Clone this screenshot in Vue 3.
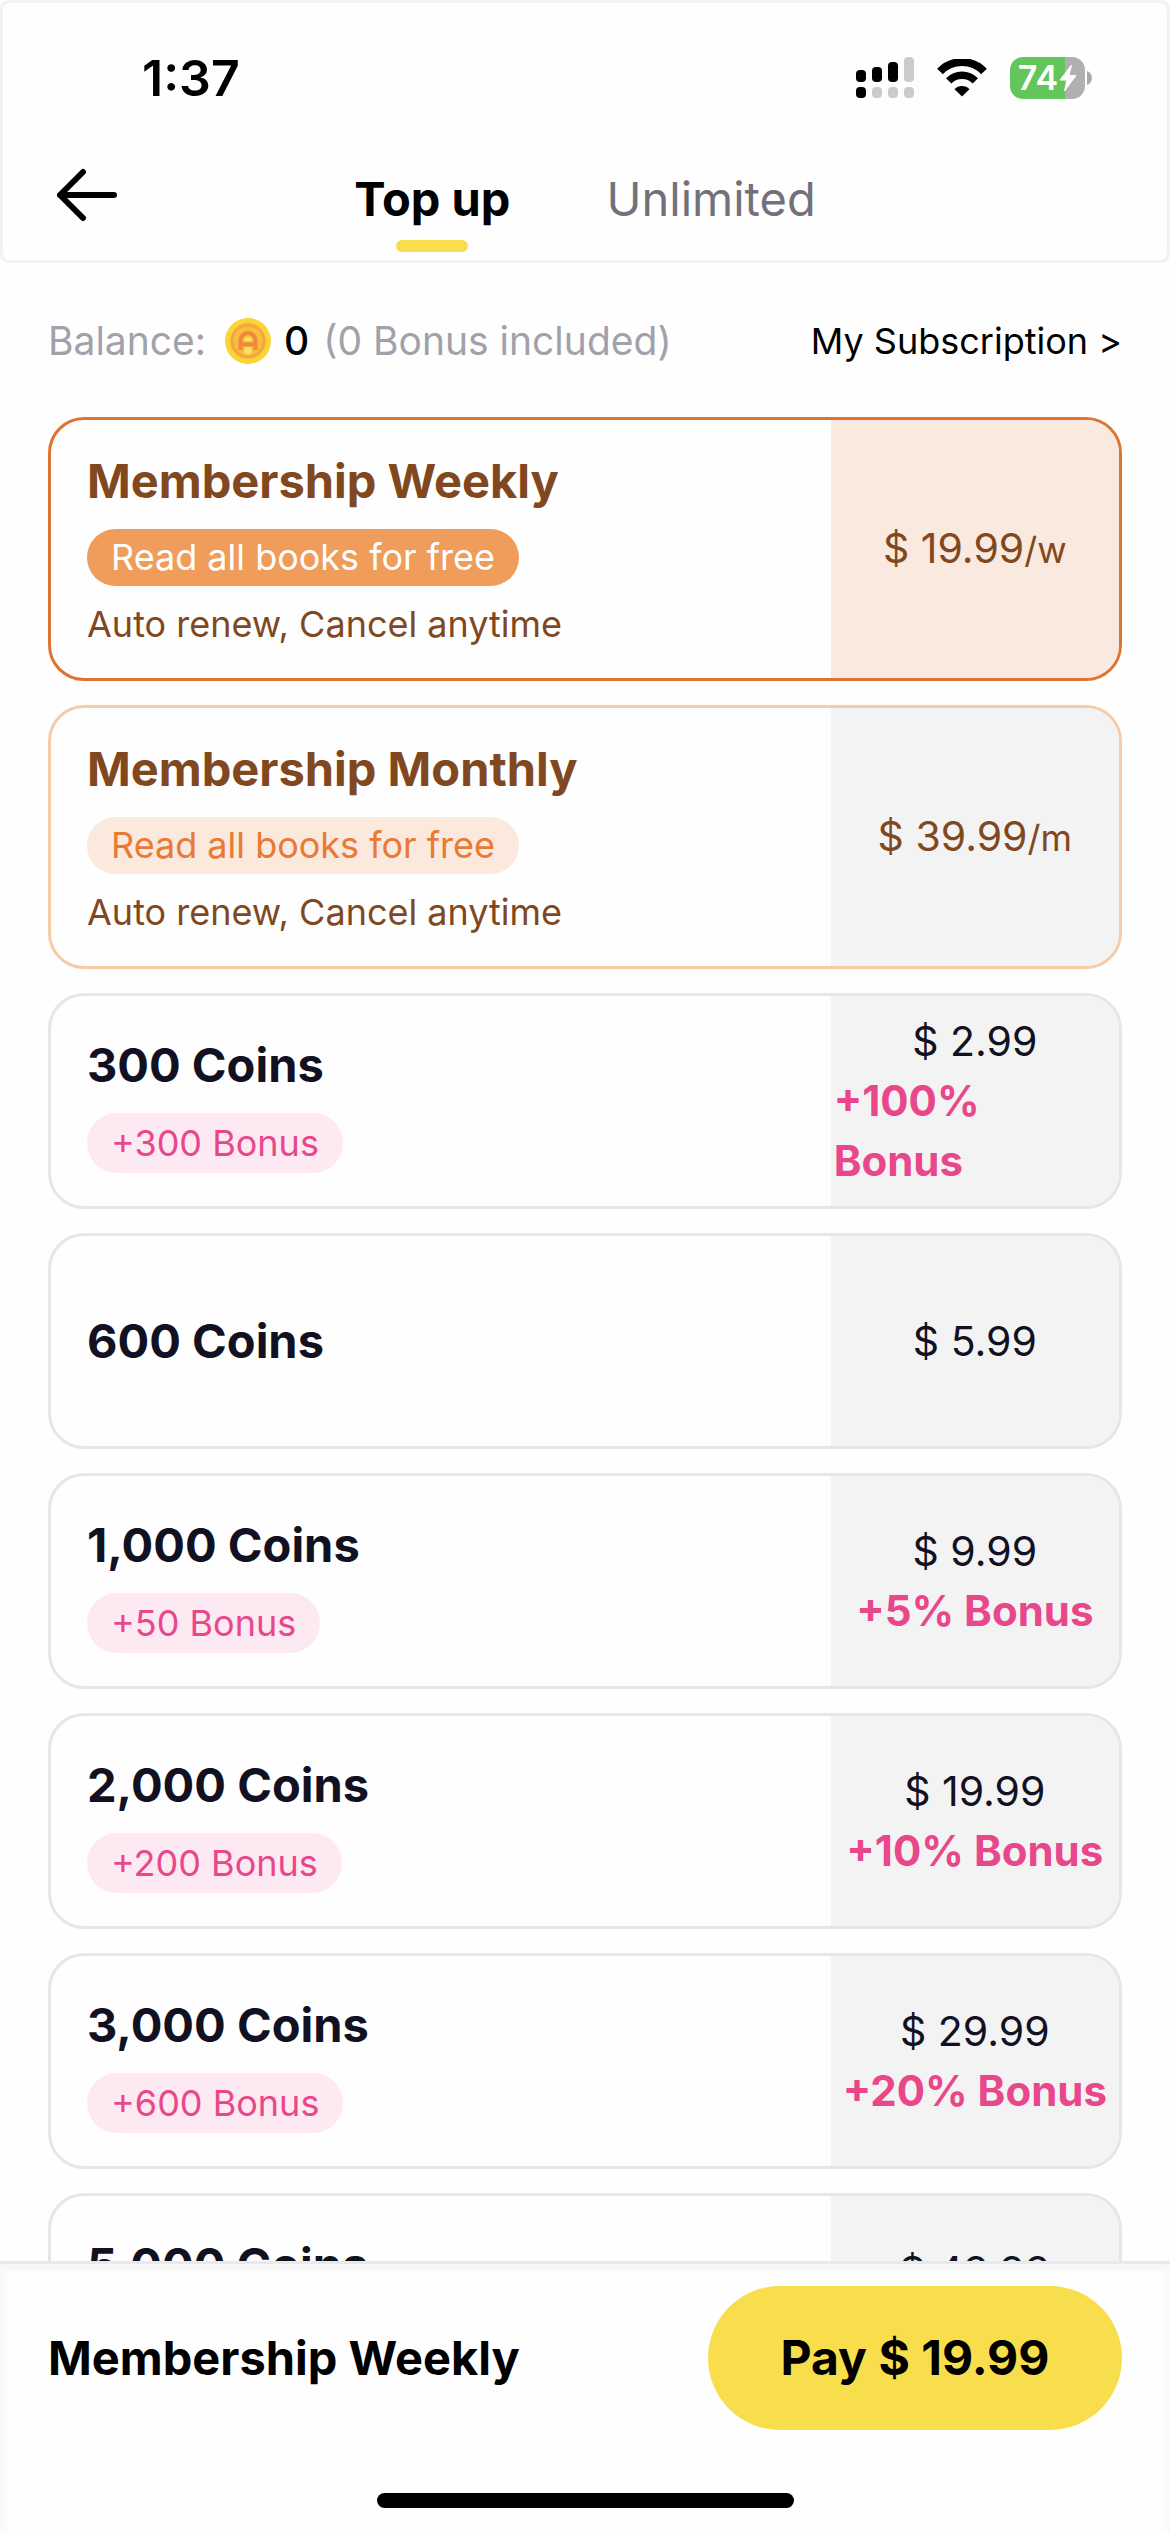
<script setup>
import { computed, ref } from 'vue'

const tabs = ['Top up', 'Unlimited']
const activeTab = ref('Top up')

const plans = [
  { id: 'weekly', title: 'Membership Weekly', price: '$ 19.99', unit: '/w', tag: 'Read all books for free', note: 'Auto renew, Cancel anytime' },
  { id: 'monthly', title: 'Membership Monthly', price: '$ 39.99', unit: '/m', tag: 'Read all books for free', note: 'Auto renew, Cancel anytime' },
  { id: 'c300', title: '300 Coins', price: '$ 2.99', tag: '+300 Bonus', extra: '+100% Bonus' },
  { id: 'c600', title: '600 Coins', price: '$ 5.99' },
  { id: 'c1000', title: '1,000 Coins', price: '$ 9.99', tag: '+50 Bonus', extra: '+5% Bonus' },
  { id: 'c2000', title: '2,000 Coins', price: '$ 19.99', tag: '+200 Bonus', extra: '+10% Bonus' },
  { id: 'c3000', title: '3,000 Coins', price: '$ 29.99', tag: '+600 Bonus', extra: '+20% Bonus' },
  { id: 'c5000', title: '5,000 Coins', price: '$ 49.99', tag: '\u00a0', extra: '\u00a0' }
]

const selectedId = ref('weekly')
const selected = computed(() => plans.find((p) => p.id === selectedId.value))
</script>

<template>
  <div class="screen">
    <header class="header">
      <div class="status">
        <span class="time">1:37</span>
        <div class="indicators">
          <svg class="signal" width="58" height="42" viewBox="0 0 58 42" aria-hidden="true">
            <g fill="#000">
              <rect x="0" y="13" width="10" height="12" rx="4" />
              <rect x="16" y="10" width="10" height="15" rx="4" />
              <rect x="32" y="5" width="10" height="20" rx="4" />
              <rect x="0" y="30" width="10" height="11" rx="4" />
            </g>
            <g fill="#cbcbcb">
              <rect x="48" y="0" width="10" height="25" rx="4" />
              <rect x="16" y="30" width="10" height="11" rx="4" />
              <rect x="32" y="30" width="10" height="11" rx="4" />
              <rect x="48" y="30" width="10" height="11" rx="4" />
            </g>
          </svg>
          <svg class="wifi" width="50" height="38" viewBox="0 0 50 38" aria-hidden="true">
            <path d="M3 12.500A30.500 30.500 0 0 1 47 12.500" fill="none" stroke="#000" stroke-width="8" />
            <path d="M11.700 21.900A18.500 18.500 0 0 1 38.300 21.900" fill="none" stroke="#000" stroke-width="7.500" />
            <path d="M25 37.500L17.500 30.200A10.500 10.500 0 0 1 32.500 30.200Z" fill="#000" />
          </svg>
          <div class="battery">
            <span class="cell">
              <span class="level">74</span>
              <svg width="18" height="28" viewBox="0 0 18 28" aria-hidden="true">
                <path d="M12.500 1L1 16H8L5.500 27L17 11.500H10Z" fill="#fff" stroke="#fff" stroke-linejoin="round" />
              </svg>
            </span>
            <svg class="nub" width="5" height="14" viewBox="0 0 5 14" aria-hidden="true">
              <path d="M0 0C6.500 2 6.500 12 0 14Z" fill="#a9a9a9" />
            </svg>
          </div>
        </div>
      </div>

      <div class="nav">
        <button class="back" type="button" aria-label="Back">
          <svg width="62" height="54" viewBox="0 0 62 54" aria-hidden="true">
            <path d="M28 4L5 27L28 50M5 27H59" fill="none" stroke="#000" stroke-width="6" stroke-linecap="round" stroke-linejoin="round" />
          </svg>
        </button>
        <nav class="tabs">
          <button
            v-for="tab in tabs"
            :key="tab"
            type="button"
            class="tab"
            :class="{ active: tab === activeTab }"
            @click="activeTab = tab"
          >{{ tab }}</button>
        </nav>
      </div>
    </header>

    <main class="content">
      <div class="balance">
        <p class="amount">
          <span>Balance:</span>
          <svg class="coin" width="48" height="48" viewBox="0 0 48 48" aria-hidden="true">
            <circle cx="24" cy="24" r="23" fill="#f9d535" />
            <circle cx="24" cy="24" r="18" fill="#f8bd40" />
            <circle cx="24" cy="24" r="16" fill="none" stroke="#f3a73c" stroke-width="3" />
            <path d="M16.500 33V23.500A7.500 7.500 0 0 1 31.500 23.500V33M17 27.500H31" fill="none" stroke="#ec8a3a" stroke-width="4" />
            <path d="M20 24A4 4 0 0 1 28 24ZM20.500 30H27.500V37H20.500Z" fill="#fae169" />
          </svg>
          <span class="count">0</span>
          <span>(0 Bonus included)</span>
        </p>
        <a class="subscription" href="#subscription">My Subscription &gt;</a>
      </div>

      <div class="plans" role="radiogroup" aria-label="Top up options">
        <label
          v-for="plan in plans"
          :key="plan.id"
          class="plan"
          :class="{ member: plan.note, selected: plan.id === selectedId }"
        >
          <input v-model="selectedId" class="choice" type="radio" name="plan" :value="plan.id" />
          <span class="info">
            <span class="title">{{ plan.title }}</span>
            <span v-if="plan.tag" class="tag">{{ plan.tag }}</span>
            <span v-if="plan.note" class="note">{{ plan.note }}</span>
          </span>
          <span class="cost">
            <span class="price">{{ plan.price }}<small v-if="plan.unit" class="unit">{{ plan.unit }}</small></span>
            <strong v-if="plan.extra" class="extra">{{ plan.extra }}</strong>
          </span>
        </label>
      </div>
    </main>

    <footer class="footer">
      <div class="checkout">
        <span class="chosen">{{ selected.title }}</span>
        <button class="pay" type="button">Pay {{ selected.price }}</button>
      </div>
      <div class="home"></div>
    </footer>
  </div>
</template>

<style>
body {
  margin: 0;
  background: #fefefe;
}
</style>

<style scoped>
.screen {
  display: flex;
  flex-direction: column;
  height: 100vh;
  box-sizing: border-box;
  background: #fefefe;
  color: #000;
  font-family: Inter, "Liberation Sans", sans-serif;
}

button {
  padding: 0;
  border: 0;
  background: none;
  color: inherit;
  font: inherit;
  cursor: pointer;
}

svg {
  display: block;
  flex: none;
}

.header {
  flex: none;
  border: 3px solid #f2f2f2;
  border-radius: 9px;
}

.status {
  display: flex;
  align-items: center;
  justify-content: space-between;
  padding: 42px 75px 0 139px;
}

.time {
  font-size: 50px;
  font-weight: 600;
  line-height: 66px;
}

.indicators {
  display: flex;
  align-items: center;
  gap: 23px;
}

.battery {
  display: flex;
  align-items: center;
  gap: 2px;
}

.cell {
  display: flex;
  align-items: center;
  justify-content: center;
  gap: 1px;
  width: 75px;
  height: 42px;
  border-radius: 13px;
  background: linear-gradient(to right, #62c65b 74%, #b0b0b0 74%);
}

.level {
  color: #fff;
  font-size: 34px;
  font-weight: 600;
  line-height: 42px;
}

.nav {
  display: grid;
  grid-template-columns: 1fr auto 1fr;
  align-items: start;
  padding: 49px 52px 8px;
}

.back {
  display: flex;
  align-items: center;
  height: 70px;
}

.tabs {
  display: flex;
  gap: 96px;
}

.tab {
  display: flex;
  flex-direction: column;
  align-items: center;
  gap: 2px;
  color: #71717a;
  font-size: 47px;
  line-height: 78px;
}

.tab::after {
  content: "";
  width: 72px;
  height: 12px;
  border-radius: 6px;
}

.tab.active {
  color: #000;
  font-weight: 700;
}

.tab.active::after {
  background: #f8dd4c;
}

.content {
  flex: 1;
  min-height: 0;
  padding: 0 48px;
  overflow-y: auto;
  scrollbar-width: none;
}

.balance {
  display: flex;
  align-items: center;
  justify-content: space-between;
  padding: 48px 0 46px;
}

.amount {
  display: flex;
  align-items: center;
  margin: 0;
  color: #a1a1aa;
  font-size: 39px;
  line-height: 60px;
}

.coin {
  margin: 0 12px 0 18px;
}

.count {
  margin-right: 14px;
  color: #000;
  font-weight: 500;
}

.subscription {
  color: #000;
  font-size: 36px;
  text-decoration: none;
}

.plans {
  display: flex;
  flex-direction: column;
  gap: 24px;
}

.plan {
  position: relative;
  display: flex;
  min-height: 216px;
  box-sizing: border-box;
  overflow: hidden;
  border: 3px solid #e6e6e6;
  border-radius: 36px;
  color: #111122;
  cursor: pointer;
}

.choice {
  position: absolute;
  opacity: 0;
}

.info {
  display: flex;
  flex: 1;
  flex-direction: column;
  align-items: flex-start;
  justify-content: center;
  gap: 12px;
  padding: 0 36px;
}

.title {
  font-size: 47px;
  font-weight: 700;
  line-height: 72px;
}

.tag {
  padding: 0 24px;
  border-radius: 30px;
  background: #fde9f1;
  color: #e8488b;
  font-size: 36px;
  line-height: 60px;
}

.cost {
  display: flex;
  flex: 0 0 27%;
  flex-direction: column;
  align-items: center;
  justify-content: center;
  background: #f3f3f4;
  font-size: 42px;
  line-height: 60px;
}

.price {
  font-size: 41px;
}

.unit {
  font-size: 36px;
}

.extra {
  padding: 0 3px;
  color: #e8488b;
  font-weight: 700;
}

.member {
  min-height: 264px;
  border-color: #f5cba8;
  color: #81481f;
}

.member .info {
  gap: 8px;
}

.member .title {
  margin-bottom: 4px;
}

.member .tag {
  background: #fbe9dd;
  color: #e87a34;
  line-height: 57px;
}

.note {
  font-size: 36px;
  line-height: 60px;
}

.selected {
  border-color: #de7431;
}

.member.selected .tag {
  background: #f09c5b;
  color: #fff;
}

.selected .cost {
  background: #f9e9de;
}

.footer {
  flex: none;
  border-top: 3px solid #e9e9e9;
  background: #fefefe;
  box-shadow: inset 0 6px 3px #f7f7f7, inset 6px 0 3px #fafafa, inset -6px 0 3px #fafafa;
}

.checkout {
  display: flex;
  align-items: center;
  justify-content: space-between;
  padding: 22px 48px 63px;
}

.chosen {
  font-size: 47px;
  font-weight: 700;
  line-height: 72px;
}

.pay {
  min-width: 414px;
  border-radius: 72px;
  background: #f8dd4c;
  font-size: 48px;
  font-weight: 700;
  line-height: 144px;
}

.home {
  width: 417px;
  height: 15px;
  margin: 0 auto 24px;
  border-radius: 8px;
  background: #000;
}
</style>
